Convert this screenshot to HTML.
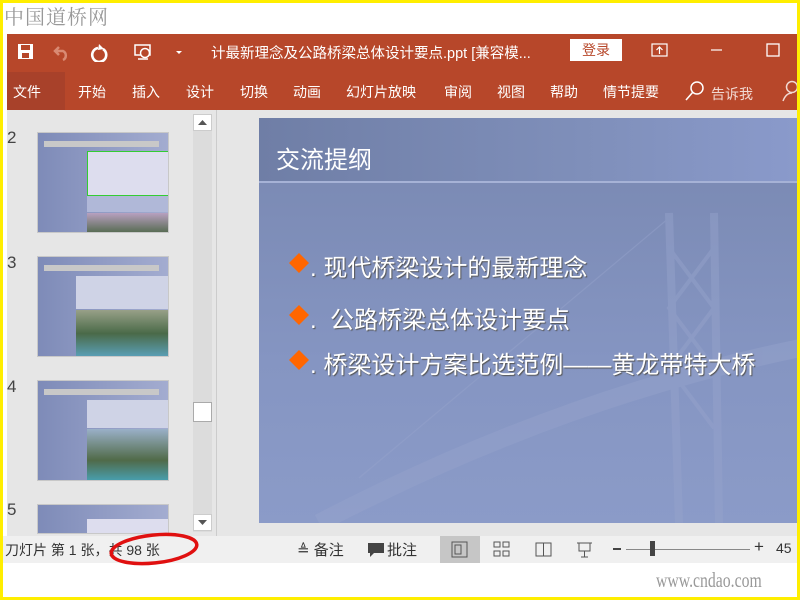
<!DOCTYPE html>
<html><head><meta charset="utf-8"><style>
*{margin:0;padding:0;box-sizing:border-box}
body{width:800px;height:600px;overflow:hidden;background:#fff;position:relative;font-family:"Liberation Sans","Noto Sans CJK SC",sans-serif}
.a{position:absolute}
.w{color:#fff;font-size:14px;white-space:nowrap}
.thumb{position:absolute;left:37px;width:132px;height:101px;border:1px solid #c8c8c8;background:linear-gradient(90deg,#7e8bb8,#a3acd0);overflow:hidden}
.num{position:absolute;left:7px;font-size:17px;color:#444}
.st{position:absolute;top:540px;font-size:14px;color:#333;white-space:nowrap}
</style></head><body>
<div class="a" style="left:0;top:0;width:800px;height:600px;border:3px solid #ffee00;z-index:9;pointer-events:none"></div>
<div class="a" style="left:4px;top:1px;font-family:'Noto Serif CJK SC',serif;font-size:20px;color:#999;letter-spacing:1px">中国道桥网</div>
<div class="a" style="left:7px;top:34px;width:793px;height:76px;background:#b7472a"></div>
<svg class="a" style="left:17px;top:42px" width="180" height="20">
<rect x="1" y="2" width="15" height="15" fill="#fff"/><rect x="4" y="3" width="9" height="5" fill="#b7472a"/><rect x="5" y="11" width="7" height="5" fill="#b7472a"/>
<path d="M42 5 l-4 4 4 4 M38 9 h8 a5 5 0 0 1 0 9" stroke="#d98a73" stroke-width="2.5" fill="none"/>
<path d="M81 6 a7 7 0 1 0 5 1" stroke="#fff" stroke-width="2.6" fill="none"/><path d="M82 2 l5 5 -6 1z" fill="#fff"/>
<rect x="118" y="3" width="15" height="10" stroke="#fff" stroke-width="1.5" fill="none"/><circle cx="128" cy="11" r="4.5" fill="#b7472a" stroke="#fff" stroke-width="1.5"/><path d="M121 17h10" stroke="#fff" stroke-width="1.5"/>
<path d="M159 9 h6 l-3 3z" fill="#fff"/>
</svg>
<div class="a w" style="left:211px;top:42px;font-size:14.5px">计最新理念及公路桥梁总体设计要点.ppt [兼容模...</div>
<div class="a" style="left:570px;top:39px;width:52px;height:22px;background:#fff;color:#b7472a;font-size:14px;text-align:center;line-height:22px">登录</div>
<svg class="a" style="left:651px;top:43px" width="140" height="16">
<rect x="1" y="1" width="15" height="12" stroke="#fff" fill="none" stroke-width="1.2"/><path d="M8.5 11V4 M5.5 7l3-3 3 3" stroke="#fff" fill="none" stroke-width="1.2"/>
<path d="M60 7h11" stroke="#fff" stroke-width="1.2"/>
<rect x="116" y="1" width="12" height="12" stroke="#fff" fill="none" stroke-width="1.3"/>
</svg>
<div class="a" style="left:7px;top:72px;width:58px;height:38px;background:#a8412a"></div>
<div class="a w" style="left:13px;top:82px">文件</div>
<div class="a w" style="left:78px;top:82px">开始</div>
<div class="a w" style="left:132px;top:82px">插入</div>
<div class="a w" style="left:186px;top:82px">设计</div>
<div class="a w" style="left:240px;top:82px">切换</div>
<div class="a w" style="left:293px;top:82px">动画</div>
<div class="a w" style="left:346px;top:82px">幻灯片放映</div>
<div class="a w" style="left:444px;top:82px">审阅</div>
<div class="a w" style="left:497px;top:82px">视图</div>
<div class="a w" style="left:550px;top:82px">帮助</div>
<div class="a w" style="left:603px;top:82px">情节提要</div>
<svg class="a" style="left:684px;top:80px" width="22" height="22"><circle cx="13" cy="8" r="6" stroke="#fff" fill="none" stroke-width="1.5"/><path d="M9 12 L2 20" stroke="#fff" stroke-width="1.6"/></svg>
<div class="a w" style="left:711px;top:84px;color:#f1d9d2">告诉我</div>
<svg class="a" style="left:782px;top:80px" width="18" height="22"><circle cx="10" cy="7" r="5.5" stroke="#f1d9d2" fill="none" stroke-width="1.5"/><path d="M1 21 q3-8 9-8" stroke="#f1d9d2" fill="none" stroke-width="1.5"/></svg>
<div class="a" style="left:7px;top:110px;width:793px;height:426px;background:#e6e6e6"></div>
<div class="a" style="left:193px;top:114px;width:19px;height:418px;background:#dcdcdc"></div>
<div class="a" style="left:193px;top:114px;width:19px;height:17px;background:#fff;border:1px solid #ccc"></div>
<svg class="a" style="left:197px;top:119px" width="11" height="7"><path d="M1 6 L5.5 1 10 6z" fill="#555"/></svg>
<div class="a" style="left:193px;top:402px;width:19px;height:20px;background:#fff;border:1px solid #aaa"></div>
<div class="a" style="left:193px;top:514px;width:19px;height:17px;background:#fff;border:1px solid #ccc"></div>
<svg class="a" style="left:197px;top:519px" width="11" height="7"><path d="M1 1 L5.5 6 10 1z" fill="#555"/></svg>
<div class="a" style="left:216px;top:110px;width:1px;height:426px;background:#ccc"></div>
<div class="num" style="top:128px">2</div><div class="num" style="top:253px">3</div><div class="num" style="top:377px">4</div><div class="num" style="top:500px">5</div>
<div class="thumb" style="top:132px"><div class="a" style="left:6px;top:8px;width:115px;height:6px;background:#c8c8c8"></div><div class="a" style="left:49px;top:18px;width:82px;height:45px;background:#dde;border:1px solid #3c3"></div><div class="a" style="left:49px;top:63px;width:82px;height:16px;background:#b0b8d8"></div><div class="a" style="left:49px;top:80px;width:82px;height:20px;background:linear-gradient(#b8a0c0,#556a50)"></div></div>
<div class="thumb" style="top:256px"><div class="a" style="left:6px;top:8px;width:115px;height:6px;background:#c8c8c8"></div><div class="a" style="left:38px;top:19px;width:94px;height:33px;background:#cfd3e6"></div><div class="a" style="left:38px;top:53px;width:94px;height:47px;background:linear-gradient(#98a088,#4a6a48 50%,#5aa0b8)"></div></div>
<div class="thumb" style="top:380px"><div class="a" style="left:6px;top:8px;width:115px;height:6px;background:#c8c8c8"></div><div class="a" style="left:49px;top:19px;width:82px;height:28px;background:#cfd3e6"></div><div class="a" style="left:49px;top:48px;width:82px;height:52px;background:linear-gradient(#9ab0c8,#506a48 60%,#48a0b0)"></div></div>
<div class="thumb" style="top:504px;height:30px"><div class="a" style="left:49px;top:14px;width:82px;height:16px;background:#dde"></div></div>
<div class="a" style="left:259px;top:118px;width:541px;height:405px;background:linear-gradient(180deg,#7887b0 0%,#8595c2 60%,#8b9bc8 100%);overflow:hidden">
 <div class="a" style="left:0;top:0;width:541px;height:63px;background:linear-gradient(90deg,#6f7ea6,#7f8fba 60%,#8a9acb)"></div>
 <div class="a" style="left:0;top:63px;width:541px;height:2px;background:#a6b2d6"></div>
 <svg class="a" style="left:0;top:0" width="541" height="405"><g stroke="#97a4cc" fill="none" opacity=".45"><path d="M410 95 L420 405 M455 95 L460 405" stroke-width="8"/><path d="M410 130 L455 190 L410 250 L455 310 M455 130 L410 190 L455 250" stroke-width="4"/><path d="M60 405 Q300 280 541 230" stroke-width="18"/><path d="M100 360 L410 100" stroke-width="1.2"/></g></svg>
 <div class="a w" style="left:17px;top:22px;font-size:24px">交流提纲</div>
</div>
<svg class="a" style="left:288px;top:253px" width="22" height="120"><path d="M11 0 L21 10 11 20 1 10z M11 52 L21 62 11 72 1 62z M11 97 L21 107 11 117 1 107z" fill="#ff6600"/></svg>
<div class="a w" style="left:310px;top:248px;font-size:24px;text-shadow:1px 1px 1px #555">. 现代桥梁设计的最新理念</div>
<div class="a w" style="left:310px;top:300px;font-size:24px;text-shadow:1px 1px 1px #555">.&nbsp; 公路桥梁总体设计要点</div>
<div class="a w" style="left:310px;top:345px;font-size:24px;text-shadow:1px 1px 1px #555">. 桥梁设计方案比选范例——黄龙带特大桥</div>
<div class="a" style="left:3px;top:536px;width:797px;height:27px;background:#f0f0f0"></div>
<div class="st" style="left:5px">刀灯片 第 1 张，共 98 张</div>
<svg class="a" style="left:100px;top:528px" width="110" height="45"><ellipse cx="54" cy="21" rx="43" ry="14" stroke="#e01010" stroke-width="3.5" fill="none" transform="rotate(-6 54 21)"/></svg>
<div class="st" style="left:297px;font-size:15px;top:539px">≜ 备注</div>
<svg class="a" style="left:367px;top:542px" width="18" height="16"><path d="M1 1h16v10H7l-4 4v-4H1z" fill="#444"/></svg>
<div class="st" style="left:387px;font-size:15px;top:539px">批注</div>
<div class="a" style="left:440px;top:536px;width:40px;height:27px;background:#c6c6c6"></div>
<svg class="a" style="left:451px;top:541px" width="150" height="18"><g stroke="#555" fill="none"><rect x="1" y="1" width="15" height="15"/><rect x="4" y="4" width="6" height="9"/><rect x="43" y="1" width="6" height="5"/><rect x="52" y="1" width="6" height="5"/><rect x="43" y="10" width="6" height="5"/><rect x="52" y="10" width="6" height="5"/><path d="M85 2h15v13H85z M92.5 2v13"/><path d="M126 2h15 M128 2v8h11V2 M133.5 10v6 M130 16h7"/></g></svg>
<div class="a" style="left:613px;top:548px;width:8px;height:2px;background:#444"></div>
<div class="a" style="left:626px;top:549px;width:124px;height:1px;background:#888"></div>
<div class="a" style="left:650px;top:541px;width:5px;height:15px;background:#444"></div>
<div class="st" style="left:754px;font-size:17px;top:537px">+</div>
<div class="st" style="left:776px">45</div>
<div class="a" style="left:656px;top:568px;font-family:'Liberation Serif',serif;font-size:21px;color:#999;transform:scaleX(.75);transform-origin:left">www.cndao.com</div>
</body></html>
